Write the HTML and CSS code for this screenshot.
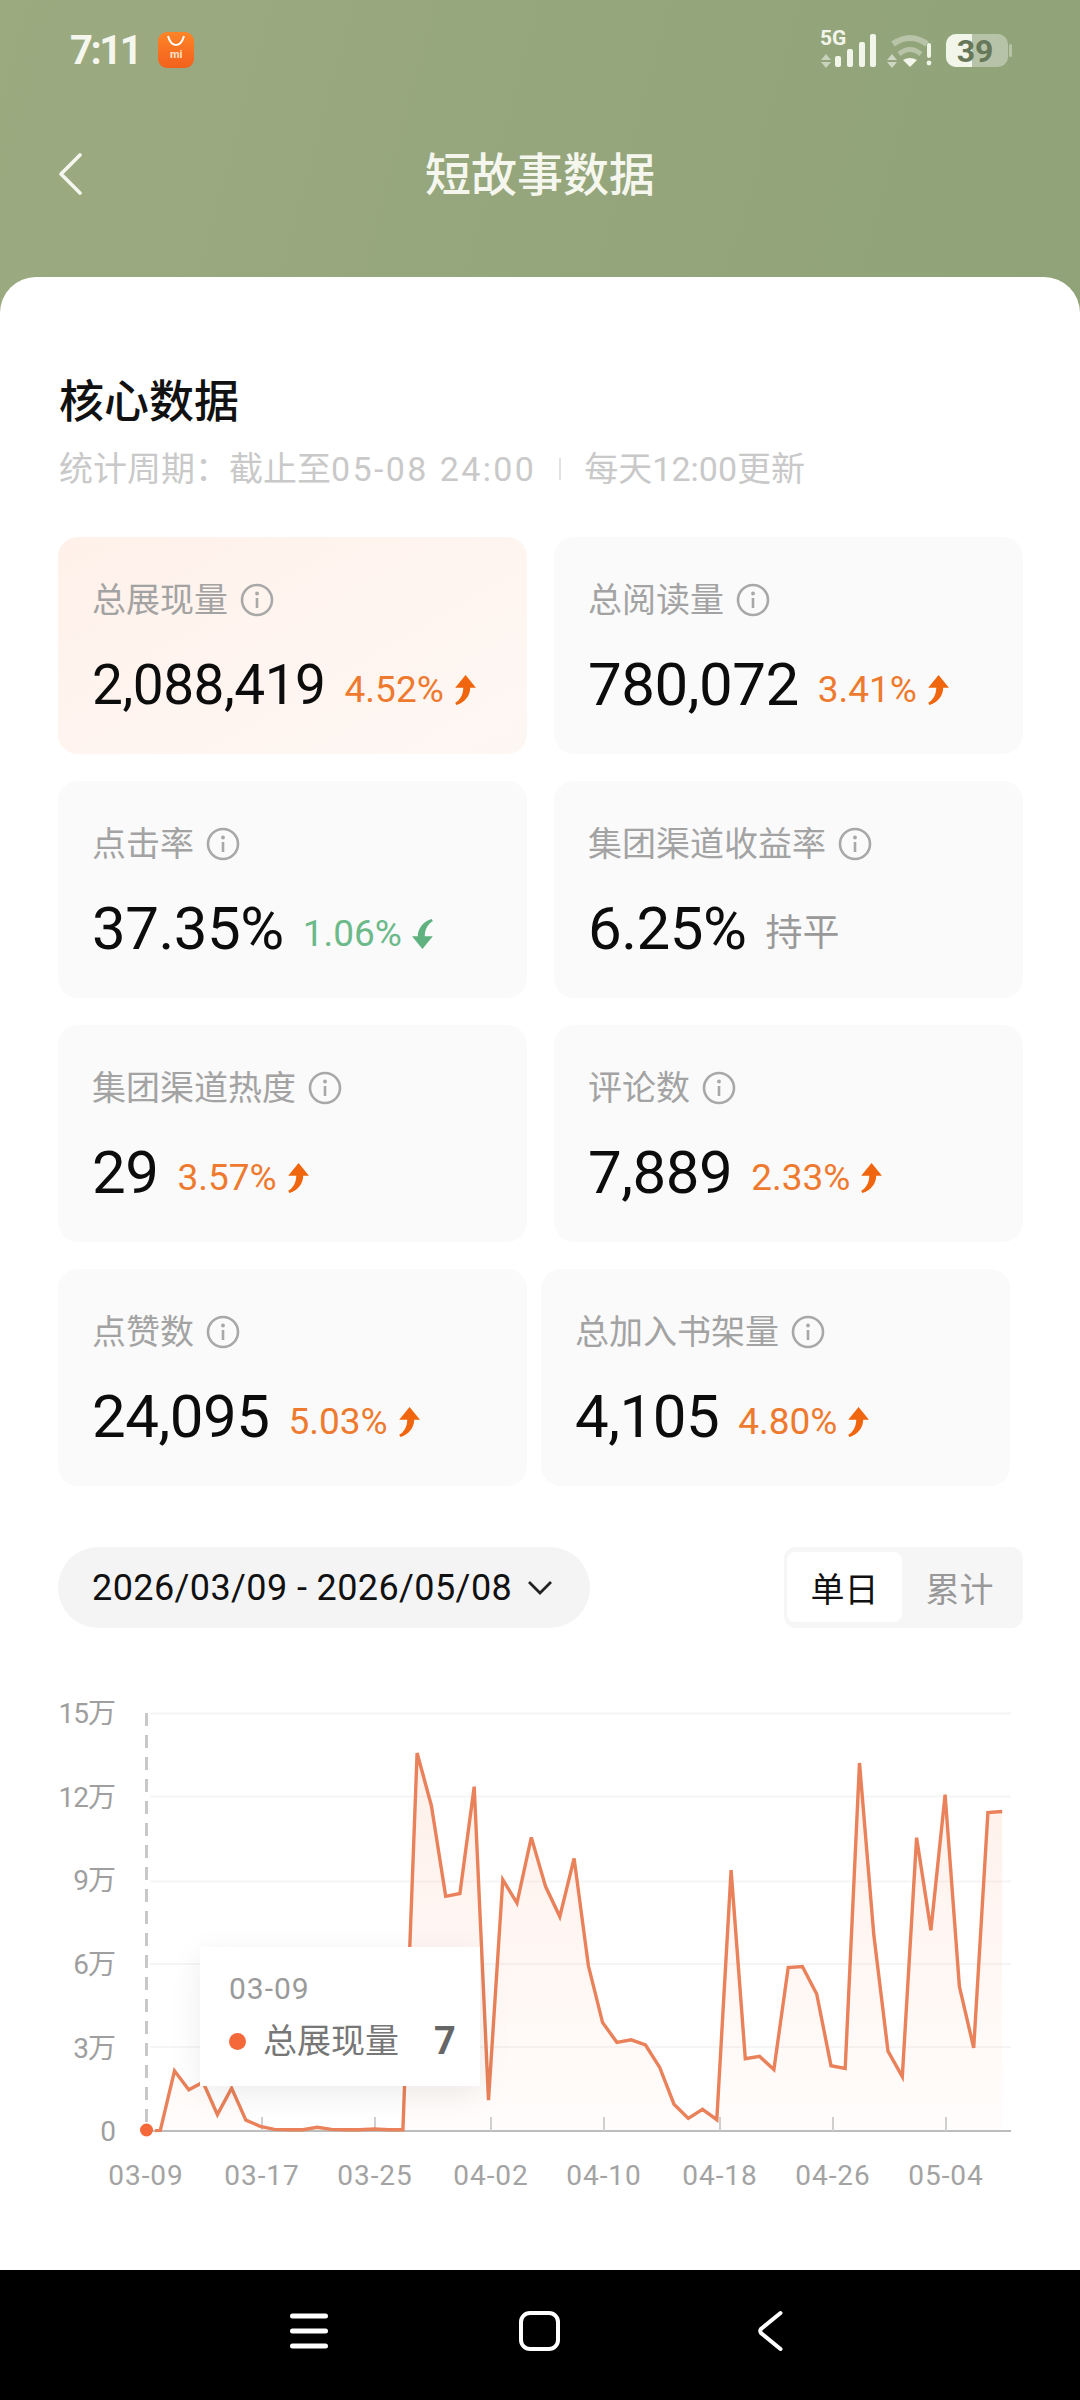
FILE: index.html
```html
<!DOCTYPE html>
<html lang="zh-CN">
<head>
  <meta charset="UTF-8">
  <title>短故事数据</title>
  <link rel="stylesheet" href="styles.css">
</head>
<body>

  <svg class="defs" width="0" height="0">
    <symbol id="up" viewBox="0 0 19 26">
      <path d="M10 0 L19 11 H14 C14 18 9 24 2 26 L1 24 C5 22 8 17 8 11 H1 Z"/>
    </symbol>
    <symbol id="down" viewBox="0 0 19 26">
      <path d="M9 26 L0 15 H5 C5 8 10 2 17 0 L18 2 C14 4 11 9 11 15 H18 Z"/>
    </symbol>
    <symbol id="info" viewBox="0 0 34 34">
      <circle cx="17" cy="17" r="15" fill="none" stroke="currentColor" stroke-width="2.6"/>
      <circle cx="17" cy="10.5" r="1.9" fill="currentColor"/>
      <path d="M17 15 V25" stroke="currentColor" stroke-width="2.6" fill="none"/>
    </symbol>
  </svg>

  <div class="screen">

    <div class="status-bar">
      <div class="status-left">
        <span class="clock">7:11</span>
        <span class="app-icon">
          <svg width="20" height="13" viewBox="0 0 20 13"><path d="M2 1 C4 8 7 10 10 10 C13 10 16 8 18 1" fill="none" stroke="#fff" stroke-width="2"/></svg>
          <span class="app-mi">mi</span>
        </span>
      </div>
      <svg class="status-right" width="196" height="50" viewBox="0 -4 196 50">
        <text x="0" y="16" class="net">5G</text>
        <path d="M6 25 L11 31 H1 Z M6 39 L1 33 H11 Z" fill="#fff" opacity=".5"/>
        <rect x="15" y="27" width="6" height="11" rx="2" fill="#f2f5ea"/>
        <rect x="27" y="20" width="6" height="18" rx="2" fill="#f2f5ea"/>
        <rect x="39" y="13" width="6" height="25" rx="2" fill="#f2f5ea"/>
        <rect x="50" y="5" width="6" height="33" rx="2" fill="#f2f5ea"/>
        <path d="M73 15 Q90 3 107 15" fill="none" stroke="#fff" stroke-opacity=".35" stroke-width="6"/>
        <path d="M79 25 Q90 16 101 25" fill="none" stroke="#fff" stroke-opacity=".35" stroke-width="5"/>
        <path d="M83 31 Q90 27 97 31 L90 38 Z" fill="#f2f5ea"/>
        <path d="M72 25 L77 31 H67 Z M72 39 L67 33 H77 Z" fill="#fff" opacity=".55"/>
        <rect x="107" y="14" width="4" height="15" rx="2" fill="#f2f5ea"/>
        <circle cx="109" cy="34" r="2.4" fill="#f2f5ea"/>
        <rect x="126" y="5" width="62" height="33" rx="10" fill="#fff" fill-opacity=".35"/>
        <path d="M152 5 H136 A10 10 0 0 0 126 15 V28 A10 10 0 0 0 136 38 H152 Z" fill="#f2f5ea"/>
        <rect x="189" y="15" width="3" height="13" rx="1.5" fill="#fff" fill-opacity=".35"/>
        <text x="155" y="33" class="batt">39</text>
      </svg>
    </div>

    <div class="topbar">
      <svg class="back" width="24" height="42" viewBox="0 0 24 42"><path d="M22 2 L3 21 L22 40" fill="none" stroke="#f5f7ef" stroke-width="3.6" stroke-linecap="round" stroke-linejoin="round"/></svg>
      <span class="title">短故事数据</span>
    </div>

    <div class="sheet">
      <h2 class="core-title">核心数据</h2>
      <div class="period">
        <span>统计周期：截止至<span class="period-num">05-08 24:00</span></span>
        <span class="period-sep"></span>
        <span>每天12:00更新</span>
      </div>

      <div class="cards">
        <div class="card-row">
          <div class="card card-active">
            <div class="card-label">总展现量 <svg class="info"><use href="#info"/></svg></div>
            <div class="card-data">
              <span class="value value-long">2,088,419</span>
              <span class="change up">4.52%<svg class="arrow"><use href="#up"/></svg></span>
            </div>
          </div>
          <div class="card">
            <div class="card-label">总阅读量 <svg class="info"><use href="#info"/></svg></div>
            <div class="card-data">
              <span class="value">780,072</span>
              <span class="change up">3.41%<svg class="arrow"><use href="#up"/></svg></span>
            </div>
          </div>
        </div>
        <div class="card-row">
          <div class="card">
            <div class="card-label">点击率 <svg class="info"><use href="#info"/></svg></div>
            <div class="card-data">
              <span class="value">37.35%</span>
              <span class="change down">1.06%<svg class="arrow"><use href="#down"/></svg></span>
            </div>
          </div>
          <div class="card">
            <div class="card-label">集团渠道收益率 <svg class="info"><use href="#info"/></svg></div>
            <div class="card-data">
              <span class="value">6.25%</span>
              <span class="change flat">持平</span>
            </div>
          </div>
        </div>
        <div class="card-row">
          <div class="card">
            <div class="card-label">集团渠道热度 <svg class="info"><use href="#info"/></svg></div>
            <div class="card-data">
              <span class="value">29</span>
              <span class="change up">3.57%<svg class="arrow"><use href="#up"/></svg></span>
            </div>
          </div>
          <div class="card">
            <div class="card-label">评论数 <svg class="info"><use href="#info"/></svg></div>
            <div class="card-data">
              <span class="value">7,889</span>
              <span class="change up">2.33%<svg class="arrow"><use href="#up"/></svg></span>
            </div>
          </div>
        </div>
        <div class="card-row card-row-tight">
          <div class="card">
            <div class="card-label">点赞数 <svg class="info"><use href="#info"/></svg></div>
            <div class="card-data">
              <span class="value">24,095</span>
              <span class="change up">5.03%<svg class="arrow"><use href="#up"/></svg></span>
            </div>
          </div>
          <div class="card">
            <div class="card-label">总加入书架量 <svg class="info"><use href="#info"/></svg></div>
            <div class="card-data">
              <span class="value">4,105</span>
              <span class="change up">4.80%<svg class="arrow"><use href="#up"/></svg></span>
            </div>
          </div>
        </div>
      </div>

      <div class="filters">
        <div class="date-pill">
          <span>2026/03/09 - 2026/05/08</span>
          <svg width="26" height="15" viewBox="0 0 26 15"><path d="M2 2 L13 13 L24 2" fill="none" stroke="#222" stroke-width="2.8"/></svg>
        </div>
        <div class="segment">
          <span class="seg-item seg-on">单日</span>
          <span class="seg-item">累计</span>
        </div>
      </div>

      <div class="chart">
        <svg class="chart-svg" width="1080" height="540" viewBox="0 0 1080 540">
          <defs>
            <linearGradient id="area" x1="0" y1="0" x2="0" y2="1">
              <stop offset="0" stop-color="#ff8a5c" stop-opacity=".13"/>
              <stop offset="1" stop-color="#ff8a5c" stop-opacity=".02"/>
            </linearGradient>
          </defs>

          <g class="grid">
            <path d="M150 33.5 H1011"/>
            <path d="M150 116.5 H1011"/>
            <path d="M150 201.5 H1011"/>
            <path d="M150 284 H1011"/>
            <path d="M150 367 H1011"/>
          </g>

          <path class="area" d="M146 451 L160.3 450.4 174.5 390.8 188.8 409.8 203.1 402.2 217.4 434.6 231.6 408.1 245.9 440.1 260.2 446.3 274.4 449.4 288.7 449.7 303 449.7 317.2 447.3 331.5 449.4 345.8 449.7 360.1 449.7 374.3 449 388.6 449.7 402.9 449.7 417.1 73 431.4 125.7 445.7 216.3 459.9 213.5 474.2 106.7 488.5 420.1 502.8 199.7 517 223.1 531.3 157.4 545.6 206.6 559.8 236.6 574.1 178.4 588.4 285.8 602.6 342.6 616.9 362.3 631.2 359.8 645.5 365 659.7 387.4 674 424.2 688.3 438.4 702.5 429.4 716.8 439.7 731.1 190.1 745.3 378.8 759.6 376.4 773.9 389.5 788.2 287.5 802.4 286.5 816.7 314 831 385.7 845.2 388.4 859.5 83 873.8 254.8 888 371.2 902.3 396.7 916.6 157.7 930.9 250.3 945.1 114.7 959.4 306.5 973.7 367.8 987.9 132.6 1002.2 131.5 V451 Z"/>

          <path class="axis" d="M150 451 H1011"/>
          <g class="ticks">
            <path d="M262 437 V451"/>
            <path d="M375 437 V451"/>
            <path d="M491 437 V451"/>
            <path d="M604 437 V451"/>
            <path d="M720 437 V451"/>
            <path d="M833 437 V451"/>
            <path d="M946 437 V451"/>
          </g>

          <polyline class="line" points="155 450.6 160.3 450.4 174.5 390.8 188.8 409.8 203.1 402.2 217.4 434.6 231.6 408.1 245.9 440.1 260.2 446.3 274.4 449.4 288.7 449.7 303 449.7 317.2 447.3 331.5 449.4 345.8 449.7 360.1 449.7 374.3 449 388.6 449.7 402.9 449.7 417.1 73 431.4 125.7 445.7 216.3 459.9 213.5 474.2 106.7 488.5 420.1 502.8 199.7 517 223.1 531.3 157.4 545.6 206.6 559.8 236.6 574.1 178.4 588.4 285.8 602.6 342.6 616.9 362.3 631.2 359.8 645.5 365 659.7 387.4 674 424.2 688.3 438.4 702.5 429.4 716.8 439.7 731.1 190.1 745.3 378.8 759.6 376.4 773.9 389.5 788.2 287.5 802.4 286.5 816.7 314 831 385.7 845.2 388.4 859.5 83 873.8 254.8 888 371.2 902.3 396.7 916.6 157.7 930.9 250.3 945.1 114.7 959.4 306.5 973.7 367.8 987.9 132.6 1002.2 131.5"/>

          <path class="cursor" d="M146.5 33 V442"/>
          <circle cx="146.5" cy="450" r="6.5" fill="#f4683a"/>

          <g class="y-labels">
            <text x="115" y="43">15万</text>
            <text x="115" y="127">12万</text>
            <text x="115" y="210">9万</text>
            <text x="115" y="294">6万</text>
            <text x="115" y="378">3万</text>
            <text x="115" y="461">0</text>
          </g>
          <g class="x-labels">
            <text x="146" y="505">03-09</text>
            <text x="262" y="505">03-17</text>
            <text x="375" y="505">03-25</text>
            <text x="491" y="505">04-02</text>
            <text x="604" y="505">04-10</text>
            <text x="720" y="505">04-18</text>
            <text x="833" y="505">04-26</text>
            <text x="946" y="505">05-04</text>
          </g>
        </svg>

        <div class="tooltip">
          <div class="tip-date">03-09</div>
          <div class="tip-row">
            <span class="tip-dot"></span>
            <span class="tip-name">总展现量</span>
            <span class="tip-val">7</span>
          </div>
        </div>
      </div>
    </div>

    <div class="nav">
      <svg width="38" height="36" viewBox="0 0 38 36"><path d="M2.5 3 H35.5 M2.5 18 H35.5 M2.5 33 H35.5" stroke="#fff" stroke-width="5" stroke-linecap="round"/></svg>
      <svg width="41" height="40" viewBox="0 0 41 40"><rect x="2" y="2" width="37" height="36" rx="9" fill="none" stroke="#fff" stroke-width="4"/></svg>
      <svg class="nav-back" width="26" height="42" viewBox="0 0 26 42"><path d="M23.5 3 L4 19 Q2.5 21 4 23 L23.5 39" fill="none" stroke="#fff" stroke-width="4" stroke-linecap="round"/></svg>
    </div>

  </div>

</body>
</html>
```

FILE: styles.css
```css
* {
  box-sizing: border-box;
}

body {
  margin: 0;
  font-family: Roboto, "Noto Sans CJK SC", sans-serif;
  background: #000;
}

.defs {
  position: absolute;
}

.screen {
  width: 1080px;
  height: 2400px;
  display: flex;
  flex-direction: column;
  overflow: hidden;
  background: linear-gradient(105deg, #9caa80, #8fa278 70%, #8ba074);
}

/* status bar */
.status-bar {
  height: 100px;
  display: flex;
  justify-content: space-between;
  align-items: center;
  padding: 0 64px 0 70px;
}

.status-left {
  display: flex;
  align-items: center;
  gap: 18px;
}

.clock {
  font-size: 40px;
  font-weight: 700;
  letter-spacing: -2.5px;
  color: #f5f7ef;
}

.app-icon {
  width: 36px;
  height: 36px;
  border-radius: 9px;
  background: linear-gradient(#ff8428, #f2611c);
  display: flex;
  flex-direction: column;
  align-items: center;
  padding-top: 3px;
}

.app-mi {
  font-size: 11px;
  line-height: 14px;
  font-weight: 700;
  color: #ffe3c8;
}

.net {
  font-size: 21px;
  font-weight: 700;
  fill: #f2f5ea;
}

.batt {
  font-size: 32px;
  font-weight: 700;
  fill: #66775a;
  text-anchor: middle;
}

/* top bar */
.topbar {
  position: relative;
  height: 177px;
  padding-bottom: 35px;
  display: flex;
  justify-content: center;
  align-items: center;
}

.back {
  position: absolute;
  left: 58px;
  top: 53px;
}

.title {
  font-size: 46px;
  font-weight: 500;
  color: #f5f7ef;
}

/* white sheet */
.sheet {
  flex: 1;
  background: #fff;
  border-radius: 36px 36px 0 0;
  padding: 96px 0 0 58px;
}

.core-title {
  margin: 0 0 0 1px;
  font-size: 45px;
  line-height: 60px;
  font-weight: 500;
  color: #111;
}

.period {
  margin: 14px 0 0 1px;
  display: flex;
  align-items: center;
  font-size: 34px;
  line-height: 44px;
  color: #c9c9c9;
}

.period-num {
  letter-spacing: 2.4px;
}

.period-sep {
  width: 2px;
  height: 22px;
  margin: 0 23px;
  background: #e2e2e2;
}

/* metric cards */
.cards {
  margin-top: 46px;
  display: flex;
  flex-direction: column;
  gap: 27px;
}

.card-row {
  display: flex;
  gap: 27px;
}

.card-row-tight {
  gap: 14px;
}

.card {
  width: 469px;
  height: 217px;
  padding: 41px 0 0 34px;
  border-radius: 20px;
  background: #fafafa;
}

.card-active {
  background: linear-gradient(150deg, #fff1ea, #fff5f0 55%, #fdf7f3);
}

.card-label {
  display: flex;
  align-items: center;
  gap: 12px;
  font-size: 34px;
  line-height: 44px;
  color: #a3a3a3;
}

.info {
  width: 34px;
  height: 34px;
  color: #a8a8a8;
}

.card-data {
  margin-top: 28px;
  display: flex;
  align-items: flex-end;
  gap: 19px;
  height: 70px;
}

.value {
  font-size: 60px;
  line-height: 70px;
  letter-spacing: -0.5px;
  color: #0c0c0c;
}

.value-long {
  font-size: 55px;
}

.change {
  display: flex;
  align-items: center;
  gap: 10px;
  margin-bottom: 8px;
  font-size: 37px;
  line-height: 44px;
}

.up {
  color: #ee7a2f;
  fill: #f0660f;
}

.down {
  color: #6cb98a;
  fill: #5fb27f;
}

.flat {
  color: #999;
}

.arrow {
  width: 22px;
  height: 30px;
}

/* date filter */
.filters {
  margin-top: 61px;
  width: 965px;
  display: flex;
  justify-content: space-between;
}

.date-pill {
  width: 532px;
  height: 81px;
  padding: 0 37px 0 34px;
  border-radius: 41px;
  background: #f4f4f4;
  display: flex;
  align-items: center;
  justify-content: space-between;
  font-size: 36px;
  letter-spacing: 0.4px;
  color: #111;
}

.segment {
  width: 239px;
  height: 81px;
  padding: 5px 0 6px 3px;
  border-radius: 12px;
  background: #f6f6f6;
  display: flex;
}

.seg-item {
  width: 115px;
  display: flex;
  align-items: center;
  justify-content: center;
  font-size: 34px;
  color: #999;
}

.seg-on {
  background: #fff;
  border-radius: 8px;
  color: #111;
}

/* chart */
.chart {
  position: relative;
  margin: 52px 0 0 -58px;
  width: 1080px;
  height: 540px;
}

.chart-svg {
  display: block;
}

.grid path {
  stroke: #f5f5f5;
  stroke-width: 2;
  fill: none;
}

.area {
  fill: url(#area);
}

.axis {
  stroke: #bdbdbd;
  stroke-width: 2;
}

.ticks path {
  stroke: #cfcfcf;
  stroke-width: 2;
}

.line {
  fill: none;
  stroke: #e9825a;
  stroke-width: 3.4;
  stroke-linejoin: miter;
}

.cursor {
  stroke: #c8c8c8;
  stroke-width: 3;
  stroke-dasharray: 13 9;
}

.y-labels text {
  font-size: 28px;
  letter-spacing: -1px;
  fill: #9f9f9f;
  text-anchor: end;
}

.x-labels text {
  font-size: 28px;
  fill: #a3a3a3;
  text-anchor: middle;
  letter-spacing: 1px;
}

.tooltip {
  position: absolute;
  left: 200px;
  top: 267px;
  width: 280px;
  height: 139px;
  padding: 22px 0 0 29px;
  background: #fff;
  box-shadow: 0 8px 30px rgba(0, 0, 0, 0.08);
}

.tip-date {
  font-size: 30px;
  line-height: 40px;
  letter-spacing: 1px;
  color: #9a9a9a;
}

.tip-row {
  margin-top: 9px;
  display: flex;
  align-items: center;
  font-size: 34px;
  line-height: 46px;
  color: #777;
}

.tip-dot {
  width: 17px;
  height: 17px;
  margin-right: 17px;
  border-radius: 50%;
  background: #f4683a;
}

.tip-val {
  margin-left: 35px;
  font-size: 38px;
  font-weight: 700;
  color: #666;
}

/* bottom navigation */
.nav {
  height: 130px;
  flex-shrink: 0;
  background: #000;
  display: flex;
  align-items: center;
  gap: 191px;
  padding: 0 0 8px 290px;
}

.nav-back {
  margin-left: 6px;
}
```
